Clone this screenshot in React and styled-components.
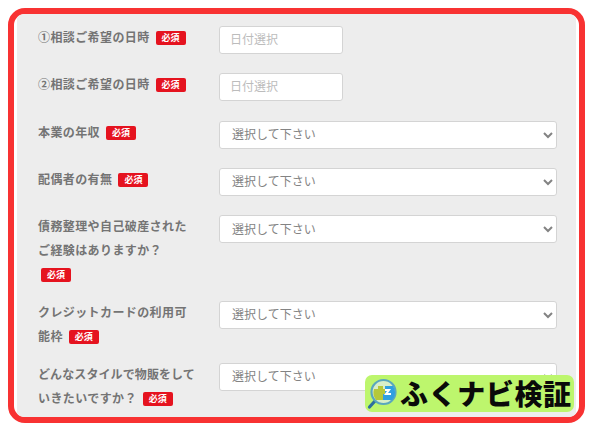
import styled, { createGlobalStyle } from "styled-components";

const GlobalStyle = createGlobalStyle`
  html, body {
    margin: 0;
    padding: 0;
    background: #fff;
  }
  body {
    font-family: "Noto Sans CJK JP", "Noto Sans", sans-serif;
  }
`;

const Page = styled.div`
  position: relative;
  width: 595px;
  height: 429px;
  padding: 8px 10px 6px 8px;
  box-sizing: border-box;
  overflow: hidden;
`;
const Frame = styled.div`
  height: 415px;
  box-sizing: border-box;
  border: 6px solid #f83232;
  border-radius: 17px;
  background: #fff;
  padding: 0 3px;
  overflow: hidden;
`;
const Panel = styled.form`
  height: 100%;
  box-sizing: border-box;
  background: #ededed;
  padding: 12px 20px 0 21px;
  display: flex;
  flex-direction: column;
  gap: 19.3px;
`;
const Row = styled.div`
  display: grid;
  grid-template-columns: 181px 338px;
  align-items: start;
`;
const Label = styled.label`
  display: block;
  width: 166px;
  margin: -1px 0 -4.5px;
  font-size: 12px;
  font-weight: 700;
  line-height: 24px;
  letter-spacing: 0.4px;
  color: #747474;
`;
const Tight = styled.span`
  letter-spacing: 0.1px;
`;
const Badge = styled.span`
  display: inline-block;
  width: 30px;
  height: 14px;
  margin-left: ${({ $first }) => ($first ? "3px" : "6px")};
  border-radius: 2px;
  background: #e5131f;
  color: #fff;
  font-size: 9px;
  font-weight: 700;
  line-height: 14px;
  letter-spacing: 0;
  text-align: center;
  vertical-align: 1px;
`;
const TextInput = styled.input`
  display: block;
  width: 124px;
  height: 28px;
  box-sizing: border-box;
  padding: 0 10px 3px;
  border: 1px solid #d4d4d4;
  border-radius: 3px;
  background: #fff;
  font-family: inherit;
  font-size: 12px;
  color: #666;
  &::placeholder {
    color: #bcbcbc;
    opacity: 1;
  }
`;
const Select = styled.select`
  display: block;
  width: 338px;
  height: 28px;
  box-sizing: border-box;
  padding: 0 8px 2px;
  border: 1px solid #d4d4d4;
  border-radius: 3px;
  background: #fff;
  font-family: inherit;
  font-size: 12px;
  color: #838383;
`;
const Stamp = styled.div`
  position: absolute;
  left: 365px;
  top: 375px;
  width: 209px;
  height: 37px;
  display: flex;
  align-items: center;
  gap: 2px;
  box-sizing: border-box;
  padding-left: 2px;
  border-radius: 7px;
  background: #bdf66d;
`;
const StampText = styled.span`
  font-size: 28px;
  font-weight: 900;
  line-height: 37px;
  letter-spacing: 0.6px;
  color: #0a0a0a;
  white-space: nowrap;
`;

const rows = [
  { label: <>①相談ご希望の日時</>, input: true },
  { label: <>②相談ご希望の日時</>, input: true },
  { label: <>本業の年収</> },
  { label: <>配偶者の有無</> },
  { label: <>債務整理や自己破産された<br />ご経験はありますか？<br /></>, first: true },
  { label: <>クレジットカードの利用可<br />能枠</> },
  { label: <><Tight>どんなスタイルで物販をして</Tight><br />いきたいですか？</> },
];

const Magnifier = () => (
  <svg width="31" height="33" viewBox="0 0 31 33" aria-hidden="true">
    <path d="M8 24 L2.5 30" stroke="#2d6f9e" strokeWidth="3.2" strokeLinecap="round" />
    <circle cx="16.5" cy="15" r="12" fill="#d8efc8" stroke="#5aa7bd" strokeWidth="2.2" />
    <path d="M7 12 h4 v-3 h5 v3 h2 v5 h-2 v6 h-7 a12 12 0 0 1 -2 -11 z" fill="#b5c83a" />
    <path d="M18 9 h8 a11 11 0 0 1 -1 14 h-9 v-6 h2 z" fill="#2f9fe0" />
    <path d="M18 12 h6 l-3 4 h3 v2 h-7 l3 -4 h-2 z" fill="#fff" />
  </svg>
);

const App = () => {
  return (
    <Page>
      <GlobalStyle />
      <Frame>
        <Panel>
          {rows.map((row, i) => (
            <Row key={i}>
              <Label>
                {row.label}
                <Badge $first={row.first}>必須</Badge>
              </Label>
              {row.input ? (
                <TextInput placeholder="日付選択" />
              ) : (
                <Select defaultValue="">
                  <option value="">選択して下さい</option>
                </Select>
              )}
            </Row>
          ))}
        </Panel>
      </Frame>
      <Stamp>
        <Magnifier />
        <StampText>ふくナビ検証</StampText>
      </Stamp>
    </Page>
  );
};

export default App;
